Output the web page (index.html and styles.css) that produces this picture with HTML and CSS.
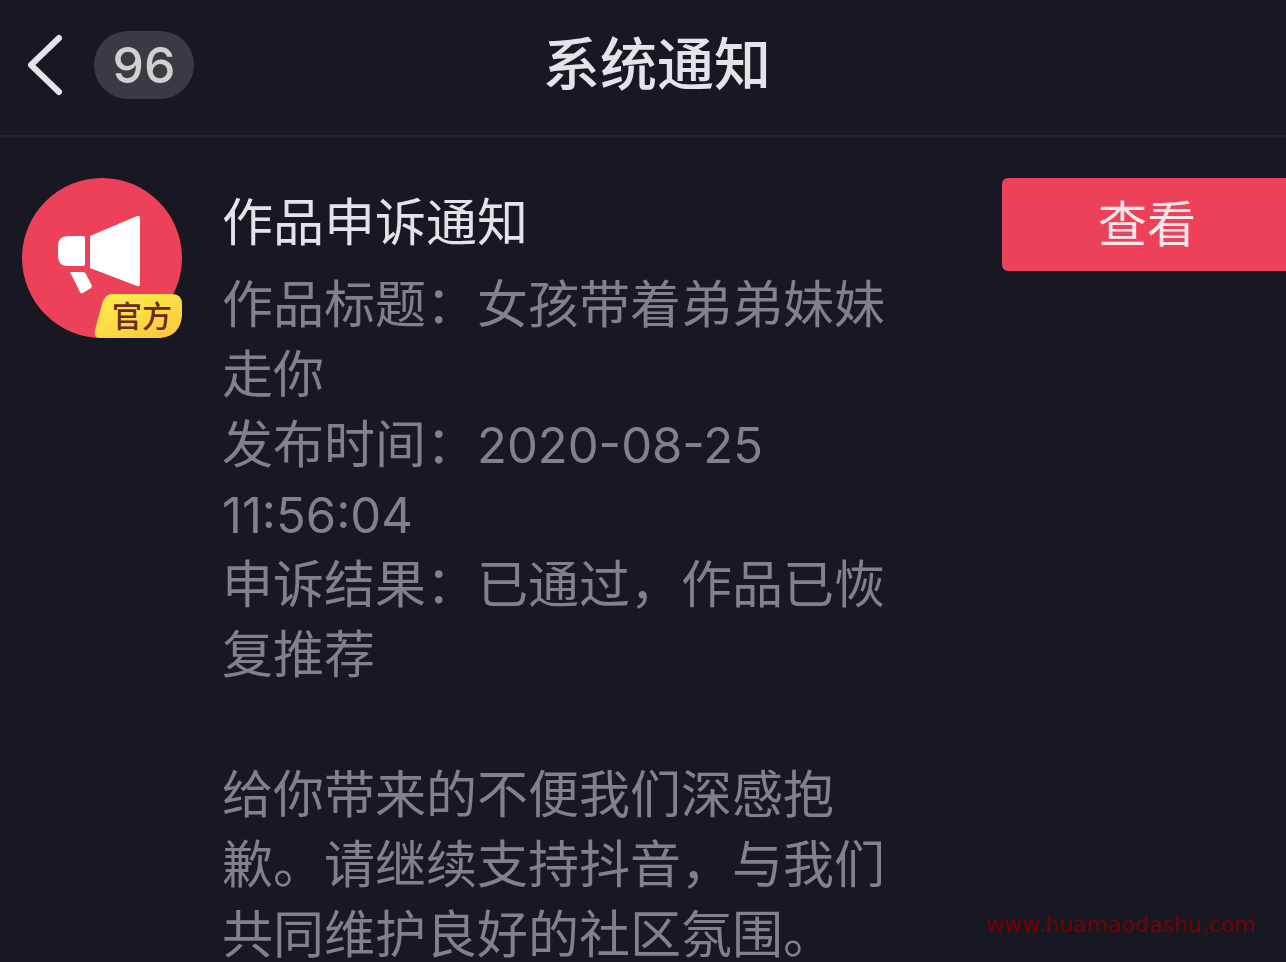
FILE: index.html
```html
<!DOCTYPE html>
<html lang="zh-CN">

<head>
  <meta charset="UTF-8" />
  <meta name="viewport" content="width=device-width, initial-scale=1.0" />
  <title>系统通知</title>
  <link rel="stylesheet" href="styles.css">
</head>

<body>
  <header class="header">
    <div class="header-left">
      <button class="back" type="button" aria-label="返回">
        <svg width="38" height="64" viewBox="0 0 38 64">
          <path d="M33 5L5 32L33 59" />
        </svg>
      </button>
      <span class="count">96</span>
    </div>
    <h1>系统通知</h1>
  </header>
  <main class="notice">
    <div class="avatar">
      <svg viewBox="0 0 160 160">
        <circle cx="80" cy="80" r="80" fill="#ec4159" />
        <path fill="#fff" d="M46 58H61Q63 58 63 60V86Q63 88 61 88H46Q36 88 36 78V68Q36 58 46 58Z" />
        <path fill="#fff" d="M68 58L115 38Q118 37 118 40V106Q118 109 115 108L68 90Z" />
        <path fill="#fff" d="M48 94H61Q63 94 64 96L70 108L69 110L61 115Q59 116 58 114Z" />
      </svg>
      <span class="tag">官方</span>
    </div>
    <div class="content">
      <h2>作品申诉通知</h2>
      <p>作品标题：女孩带着弟弟妹妹走你</p>
      <p>发布时间：<time>2020-08-25 11:56:04</time></p>
      <p>申诉结果：已通过，作品已恢复推荐</p>
      <p class="tips">给你带来的不便我们深感抱歉。请继续支持抖音，与我们共同维护良好的社区氛围。</p>
    </div>
    <button class="view" type="button">查看</button>
  </main>
  <div class="watermark">www.huamaodashu.com</div>
</body>

</html>
```
FILE: styles.css
```css
* {
  padding: 0;
  margin: 0;
  box-sizing: border-box;
}

body {
  background: #181822;
  color: #e4e4e8;
  font-family: Inter, "Noto Sans CJK SC", sans-serif;
}

button {
  border: 0;
  background: none;
  color: inherit;
  font-family: inherit;
  cursor: pointer;
}

.header {
  display: grid;
  grid-template-columns: 1fr auto 1fr;
  align-items: center;
  height: 138px;
  padding: 0 0 6px 28px;
  border-bottom: 3px solid #22222d;
}

.header-left {
  display: flex;
  align-items: center;
  gap: 30px;
}

.back svg {
  display: block;
  fill: none;
  stroke: #e4e4e8;
  stroke-width: 6;
  stroke-linecap: round;
  stroke-linejoin: round;
}

.back {
  margin-left: -2px;
}

.count {
  width: 100px;
  border-radius: 34px;
  background: #3a3a43;
  color: #cfcfd4;
  font-size: 50px;
  font-weight: 500;
  line-height: 68px;
  text-align: center;
}

.header h1 {
  font-size: 57px;
  font-weight: 500;
  line-height: 80px;
}

.notice {
  display: flex;
  align-items: flex-start;
  padding: 40px 0 0 22px;
}

.avatar {
  position: relative;
  flex: none;
  width: 160px;
  height: 160px;
  margin-right: 40px;
}

.avatar svg {
  display: block;
}

.tag {
  position: absolute;
  right: 0;
  bottom: 0;
  width: 88px;
  height: 44px;
  padding-left: 8px;
  background: linear-gradient(160deg, #fff04e, #fbc63c);
  clip-path: path("M18 0H78Q88 0 88 10V22Q86 42 66 44H6Q-1 44 1 36L8 10Q11 0 18 0Z");
  color: #6a2b10;
  font-size: 30px;
  font-weight: 500;
  line-height: 44px;
  text-align: center;
}

.content {
  flex: 1;
  padding-top: 10px;
  color: #818188;
  font-size: 51px;
  line-height: 70px;
}

.content h2 {
  margin-bottom: 12px;
  color: #e4e4e8;
  font-size: 51px;
  font-weight: 400;
}

.content p {
  max-width: 13em;
}

.content time {
  font-size: 49px;
  line-height: 60px;
}

.content .tips {
  margin-top: 70px;
}

.view {
  flex: none;
  height: 93px;
  padding: 0 90px 8px 96px;
  border-radius: 6px 0 0 6px;
  background: #ec4159;
  color: #fbe6e9;
  font-size: 49px;
}

.watermark {
  position: fixed;
  right: 30px;
  bottom: 22px;
  color: #7a0000;
  font-family: "DejaVu Sans", sans-serif;
  font-size: 22px;
  line-height: 30px;
}
```
